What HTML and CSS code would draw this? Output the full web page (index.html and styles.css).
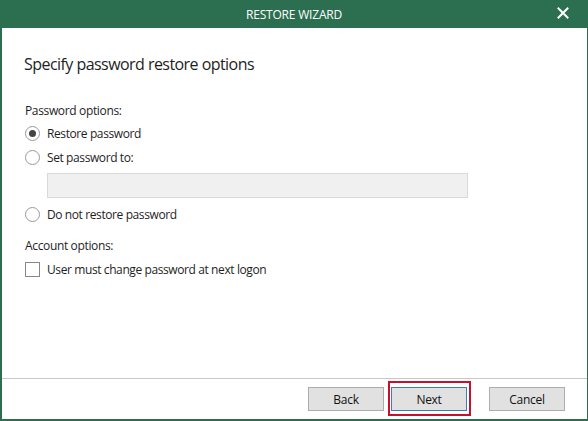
FILE: index.html
```html
<!DOCTYPE html>
<html>
<head>
<meta charset="utf-8">
<link rel="stylesheet" href="styles.css">
</head>
<body>
<div class="window">
  <div class="titlebar">
    <span class="title">RESTORE WIZARD</span>
    <svg class="close" width="12" height="12" viewBox="0 0 12 12"><path d="M1.5 1.5 L10.5 10.5 M10.5 1.5 L1.5 10.5" stroke="#fff" stroke-width="2" stroke-linecap="square"/></svg>
  </div>
  <div class="content">
    <h1 class="heading">Specify password restore options</h1>
    <div class="group-label">Password options:</div>
    <div class="option"><span class="radio checked"></span><span>Restore password</span></div>
    <div class="option"><span class="radio"></span><span>Set password to:</span></div>
    <div class="textbox"></div>
    <div class="option"><span class="radio"></span><span>Do not restore password</span></div>
    <div class="group-label account">Account options:</div>
    <div class="option"><span class="checkbox"></span><span>User must change password at next logon</span></div>
  </div>
  <div class="footer">
    <button class="btn">Back</button>
    <button class="btn primary">Next</button>
    <button class="btn cancel">Cancel</button>
  </div>
</div>
</body>
</html>
```
FILE: styles.css
```css
* { box-sizing: border-box; }
html, body { margin: 0; padding: 0; }
body {
  width: 588px;
  height: 421px;
  font-family: "Open Sans", "Noto Sans", sans-serif;
  font-size: 12px;
  color: #1e1e1e;
  background: #fff;
}
.window {
  width: 588px;
  height: 421px;
  border: 1px solid #2b6e50;
  border-top: none;
  border-left-width: 2px;
  border-bottom-width: 2px;
  display: flex;
  flex-direction: column;
}
.titlebar {
  height: 28px;
  background: #2b6e50;
  color: #fff;
  display: flex;
  align-items: center;
  justify-content: center;
  position: relative;
  margin: 0 -1px 0 -2px;
}
.title {
  font-size: 12px;
  letter-spacing: -0.2px;
  padding-top: 1px;
}
.close {
  position: absolute;
  right: 19px;
  top: 7px;
}
.content {
  flex: 1;
  padding: 25px 0 0 22px;
}
.heading {
  margin: 0 0 27px 0;
  font-size: 16px;
  font-weight: normal;
  letter-spacing: -0.55px;
  color: #1e1e1e;
  line-height: 22px;
}
.group-label {
  height: 17px;
  line-height: 17px;
  margin-left: 1px;
  margin-bottom: 6px;
  letter-spacing: -0.35px;
}
.group-label.account {
  margin-top: 14px;
  margin-bottom: 7px;
}
.option {
  display: flex;
  align-items: center;
  height: 17px;
  margin-bottom: 7px;
  margin-left: 1px;
  letter-spacing: -0.4px;
}
.radio {
  width: 15px;
  height: 15px;
  border: 1px solid #999;
  border-radius: 50%;
  margin-right: 7px;
  display: flex;
  align-items: center;
  justify-content: center;
  background: #fff;
  flex: none;
}
.radio.checked::after {
  content: "";
  width: 7px;
  height: 7px;
  border-radius: 50%;
  background: #444;
}
.checkbox {
  width: 15px;
  height: 15px;
  border: 1px solid #888;
  margin-right: 7px;
  background: #fff;
  flex: none;
}
.textbox {
  width: 421px;
  height: 25px;
  margin-left: 23px;
  margin-top: 1px;
  margin-bottom: 8px;
  background: #f0f0f0;
  border: 1px solid #d9d9d9;
}
.footer {
  height: 41px;
  border-top: 1px solid #c8c8c8;
  display: flex;
  justify-content: flex-end;
  align-items: flex-start;
  padding: 8px 22px 0 0;
  gap: 7px;
}
.btn {
  width: 76px;
  height: 24px;
  background: #e1e1e1;
  border: 1px solid #adadad;
  font-family: "Open Sans", "Noto Sans", sans-serif;
  font-size: 12px;
  color: #111;
  padding: 1px 0 0 0;
  letter-spacing: -0.3px;
}
.btn.primary {
  position: relative;
  border-color: #3c7fb1;
  background: #e1e1e1;
}
.btn.primary::after {
  content: "";
  position: absolute;
  left: -4px;
  right: -5px;
  top: -7px;
  bottom: -6px;
  border: 2px solid #c8102e;
}
.btn.cancel {
  margin-left: 15px;
}
```
